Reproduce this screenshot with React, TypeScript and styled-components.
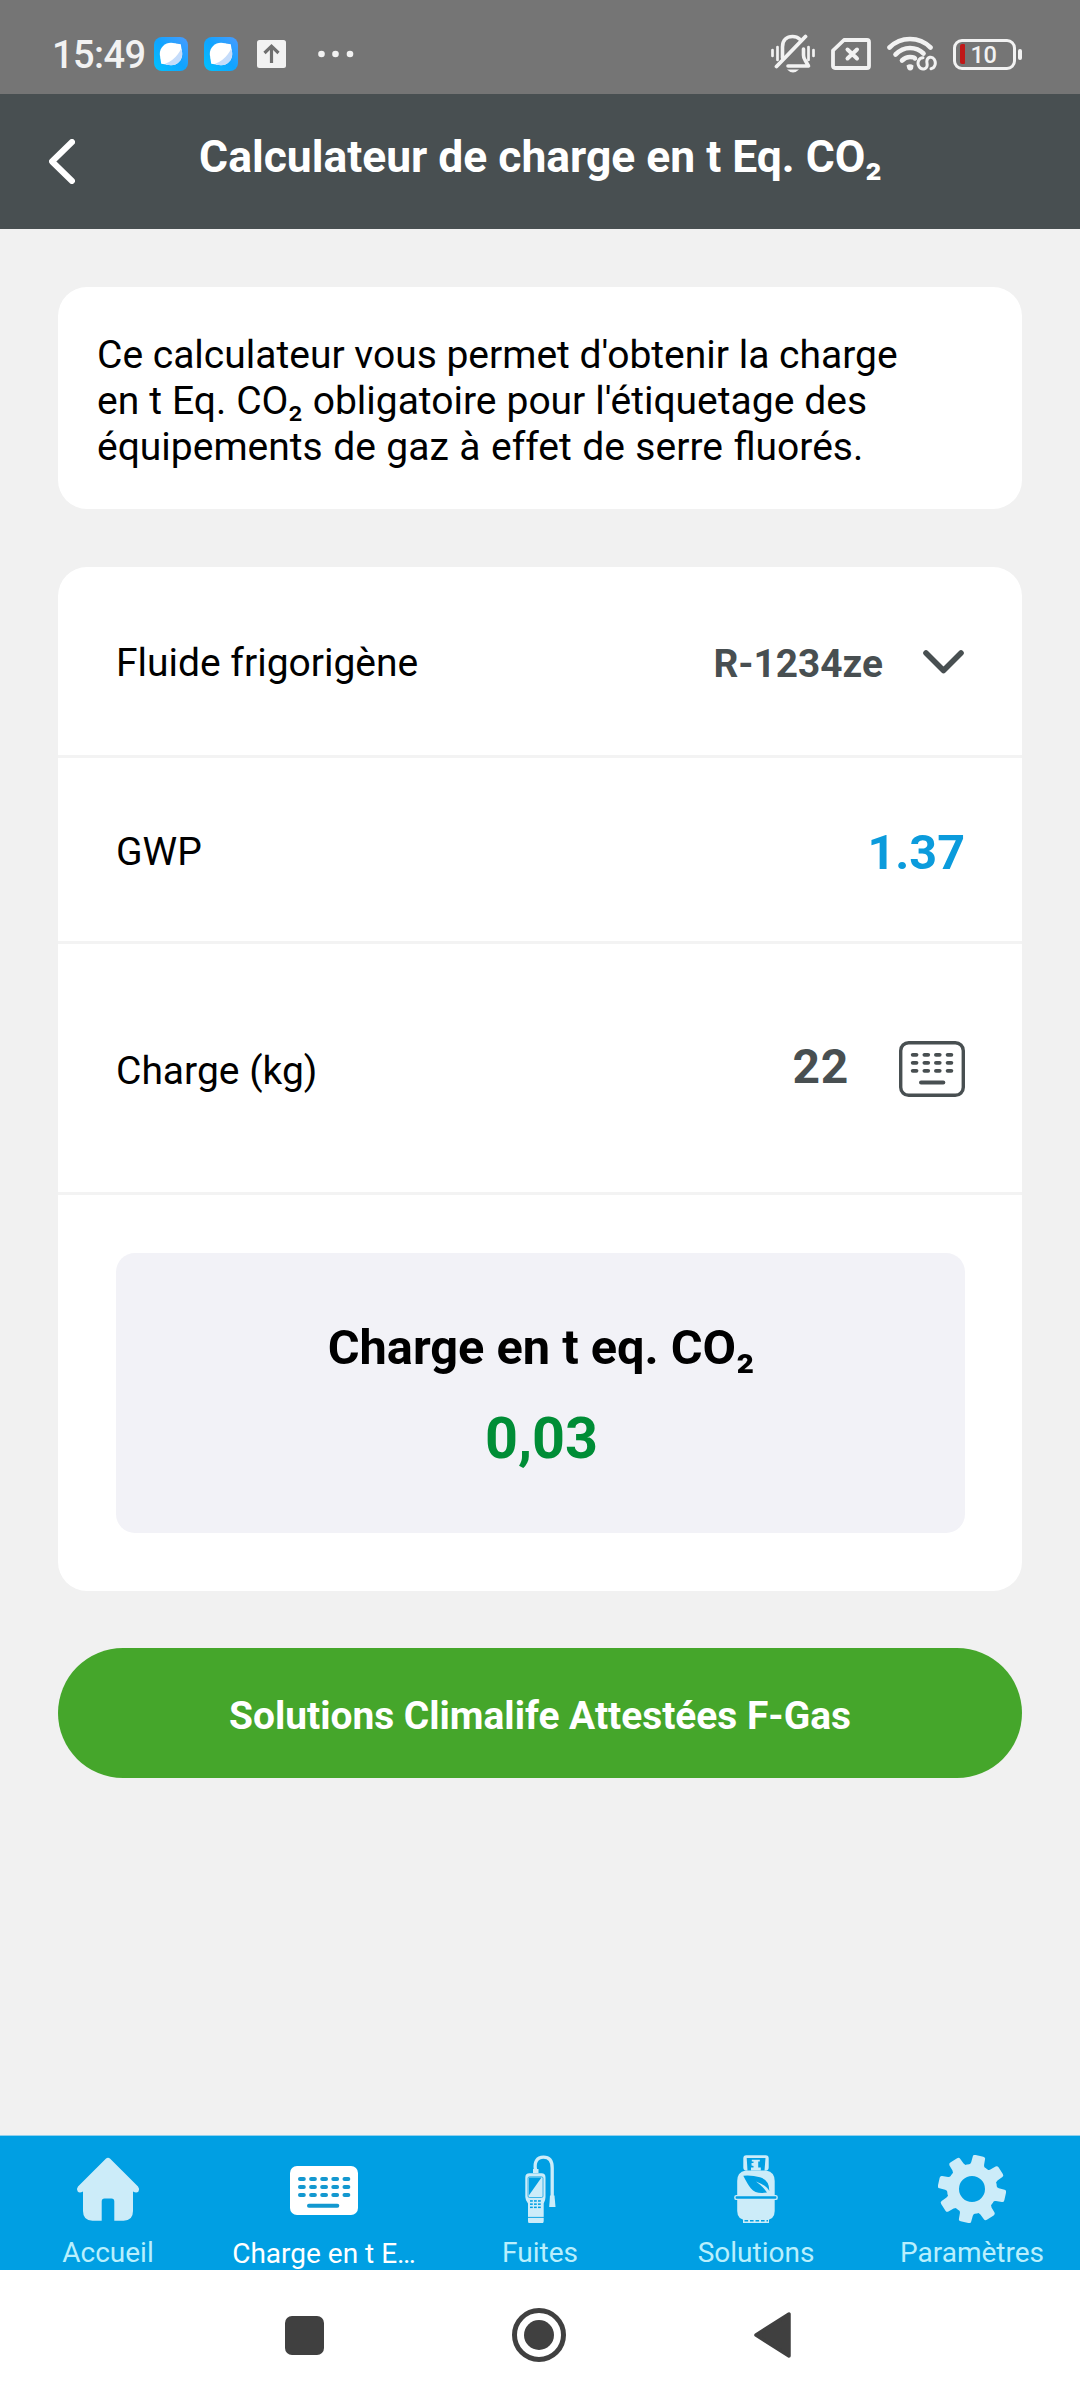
import React from "react";
import styled, { createGlobalStyle } from "styled-components";

const GlobalStyle = createGlobalStyle`
  * { box-sizing: border-box; }
  html, body { margin: 0; padding: 0; }
  body { background: #f1f1f1; font-family: Roboto, "Noto Sans", sans-serif; }
  svg { display: block; flex: none; }
`;

const Screen = styled.div`
  width: 1080px;
  height: 2400px;
  display: flex;
  flex-direction: column;
  background: #f1f1f1;
  overflow: hidden;
`;

const StatusBar = styled.div`
  height: 94px;
  flex: none;
  display: flex;
  justify-content: space-between;
  padding: 14px 58px 0 52px;
  background: #757575;
`;

const StatusGroup = styled.div`
  display: flex;
  align-items: center;
  gap: 16px;
  height: 80px;
`;

const Clock = styled.span`
  width: 92px;
  margin-right: -6px;
  padding-top: 1px;
  font-size: 38px;
  line-height: 44px;
  font-weight: 500;
  letter-spacing: -0.6px;
  color: #f2f2f2;
  white-space: nowrap;
`;

const Overflow = styled.div`
  display: flex;
  align-items: center;
  gap: 32px;
  margin-left: 3px;
`;

const Battery = styled.div`
  display: flex;
  align-items: center;
`;

const BatteryShell = styled.div`
  width: 63px;
  height: 31px;
  display: flex;
  align-items: center;
  padding: 0 0 0 3.5px;
  border: 3px solid #f2f2f2;
  border-radius: 9px;
`;

const BatteryCharge = styled.div`
  width: 5px;
  height: 20px;
  margin-right: 6px;
  border-radius: 2px 1px 1px 2px;
  background: #c01818;
`;

const BatteryText = styled.span`
  padding-top: 1px;
  font-size: 23.5px;
  line-height: 26px;
  font-weight: 500;
  letter-spacing: -0.3px;
  color: #f2f2f2;
`;

const BatteryTip = styled.div`
  width: 4px;
  height: 11px;
  margin-left: 2px;
  border-radius: 2px;
  background: #f2f2f2;
`;

const Header = styled.header`
  height: 135px;
  flex: none;
  display: grid;
  grid-template-columns: 120px 840px 120px;
  background: #484f51;
`;

const BackButton = styled.div`
  padding: 45px 0 0 49px;
`;

const Title = styled.h1`
  margin: 0;
  padding: 37px 0 0 1px;
  font-size: 44.4px;
  line-height: 52px;
  font-weight: 700;
  text-align: center;
  color: #fff;
  white-space: nowrap;
`;

const Content = styled.main`
  flex: 1;
  padding: 58px 58px 0;
  display: flex;
  flex-direction: column;
`;

const Card = styled.section`
  border-radius: 29px;
  background: #fff;
  overflow: hidden;
`;

const Intro = styled(Card)`
  height: 222px;
  margin-bottom: 58px;
  padding: 45px 39px 0;
  font-size: 39px;
  line-height: 46px;
  color: #000;
  white-space: nowrap;
`;

const IntroLine = styled.div<{ $wordGap?: number }>`
  word-spacing: ${(p) => p.$wordGap ?? 0}px;
`;

const Row = styled.div<{ $height: number }>`
  height: ${(p) => p.$height}px;
  display: flex;
  align-items: center;
  padding: 0 57px 0 58px;
  border-bottom: 3px solid #f3f3f3;
`;

const Label = styled.span<{ $drop: number }>`
  flex: 1;
  padding-top: ${(p) => p.$drop}px;
  font-size: 39px;
  line-height: 46px;
  color: #000;
`;

const Value = styled.span<{ $size: number; $color: string; $shift?: number; $gap?: number; $spacing?: number }>`
  font-size: ${(p) => p.$size}px;
  line-height: 58px;
  font-weight: 700;
  color: ${(p) => p.$color};
  letter-spacing: ${(p) => p.$spacing ?? 0}px;
  margin-top: ${(p) => p.$shift ?? 0}px;
  margin-right: ${(p) => p.$gap ?? 0}px;
`;

const RowIcon = styled.div`
  padding-top: 2px;
`;

const ResultWrap = styled.div`
  height: 396px;
  padding: 58px 57px 58px 58px;
`;

const Result = styled.div`
  height: 280px;
  padding-top: 66px;
  border-radius: 19px;
  background: #f2f2f7;
  text-align: center;
`;

const ResultTitle = styled.div`
  padding-left: 1px;
  font-size: 48.7px;
  line-height: 58px;
  font-weight: 700;
  color: #000;
`;

const ResultValue = styled.div`
  margin-top: 27px;
  padding-left: 2px;
  font-size: 57.5px;
  line-height: 70px;
  font-weight: 700;
  color: #008d36;
`;

const Cta = styled.button`
  width: 964px;
  height: 130px;
  flex: none;
  margin: 57px 0 0;
  padding: 5px 0 0;
  border: 0;
  border-radius: 65px;
  background: #45a62b;
  color: #fff;
  font-family: inherit;
  font-size: 38.9px;
  font-weight: 700;
`;

const Tabs = styled.nav`
  height: 135px;
  flex: none;
  display: grid;
  grid-template-columns: repeat(5, 216px);
  border-top: 1px solid #8fcfec;
  background: #009fe3;
`;

const Tab = styled.div<{ $active?: boolean }>`
  display: flex;
  flex-direction: column;
  align-items: center;
  padding-top: 19px;
  color: ${(p) => (p.$active ? "#fff" : "#ccecf9")};
`;

const TabLabel = styled.span<{ $active?: boolean }>`
  width: 184px;
  margin-top: ${(p) => (p.$active ? 14 : 13)}px;
  font-size: 28px;
  line-height: 34px;
  text-align: center;
  white-space: nowrap;
  color: ${(p) => (p.$active ? "#fff" : "#b9effd")};
`;

const SystemNav = styled.div`
  height: 130px;
  flex: none;
  display: flex;
  align-items: center;
  padding-left: 285px;
  background: #fff;
`;

const Square = styled.div`
  width: 39px;
  height: 39px;
  margin-right: 188px;
  border-radius: 7px;
  background: #404040;
`;

const Ring = styled.div`
  width: 54px;
  height: 54px;
  display: grid;
  place-items: center;
  margin-right: 188px;
  border: 5px solid #404040;
  border-radius: 50%;
`;

const Dot = styled.div`
  width: 30px;
  height: 30px;
  border-radius: 50%;
  background: #404040;
`;

const BrowserIcon = () => (
  <svg width="34" height="34" viewBox="0 0 34 34">
    <defs>
      <linearGradient id="sky" x1="1" y1="0" x2="0" y2="1">
        <stop offset="0" stopColor="#4a9bff" />
        <stop offset="0.5" stopColor="#10a4ff" />
        <stop offset="1" stopColor="#00c4ff" />
      </linearGradient>
      <clipPath id="disc">
        <circle cx="17" cy="17" r="11.2" />
      </clipPath>
    </defs>
    <rect width="34" height="34" rx="8" fill="url(#sky)" />
    <circle cx="17" cy="17" r="11.2" fill="#fff" />
    <path d="M6.200 20L7.200 26.800L14 27.800ZM20 6.200L26.800 7.200L27.800 14Z" fill="#fff" />
    <path d="M29 7Q24 23 8 28L30 30Z" fill="#c5dcfa" clipPath="url(#disc)" />
  </svg>
);

const UploadIcon = () => (
  <svg width="29" height="28" viewBox="0 0 29 28">
    <rect width="29" height="28" rx="2.5" fill="#f2f2f2" />
    <path d="M14.5 23V7M7.500 13L14.500 6.200L21.500 13" fill="none" stroke="#6f6f6f" strokeWidth="3.200" />
  </svg>
);

const MoreIcon = () => (
  <svg width="36" height="8" viewBox="0 0 36 8">
    <g fill="#f2f2f2">
      <circle cx="3.500" cy="4" r="3.300" />
      <circle cx="17.500" cy="4" r="3.300" />
      <circle cx="32" cy="4" r="3.300" />
    </g>
  </svg>
);

const SilentIcon = () => (
  <svg width="44" height="40" viewBox="0 0 44 40" fill="none" stroke="#f2f2f2" strokeLinecap="round">
    <path d="M1.500 16V22M6.500 13V26M37.500 13V26M42.500 16V22" strokeWidth="2.700" />
    <path d="M11.500 24V13C11.500 6 16 2.500 21.500 2.500Q26 2.500 28.500 5" strokeWidth="3.600" />
    <path d="M32.500 15V21Q32.500 24 34 26L37.500 32H17" strokeWidth="3.600" strokeLinejoin="round" />
    <path d="M5.500 32.500L34.500 2.500" strokeWidth="3.800" />
    <path d="M16 35.500H28Q22 41.500 16 35.500Z" fill="#f2f2f2" stroke="none" />
  </svg>
);

const NoSimIcon = () => (
  <svg width="40" height="32" viewBox="0 0 40 32" fill="none" stroke="#f2f2f2" strokeLinejoin="round">
    <path d="M13 2H36Q38 2 38 4V28Q38 30 36 30H4Q2 30 2 28V12.500Z" strokeWidth="3.800" />
    <path d="M16.500 11.500L26 20.500M26 11.500L16.500 20.500" strokeWidth="4" strokeLinecap="round" />
  </svg>
);

const WifiIcon = () => (
  <svg width="50" height="36" viewBox="0 0 50 36" fill="none" stroke="#f2f2f2" strokeLinecap="round">
    <path d="M2.500 11.500Q11 3 23 3T43.500 11.500" strokeWidth="4.600" />
    <path d="M8.500 18.500Q15 12 23 12T36.500 17.500" strokeWidth="4.600" />
    <path d="M15 24.500Q18.500 21 23 21T28 22.500" strokeWidth="4.600" />
    <path d="M19.500 29.500Q23 26.800 26.500 29.500L26 33Q23 36 20.500 33Z" fill="#f2f2f2" stroke="none" />
    <path
      d="M36 21.800C31.500 22 29.800 27 32 30.500C34.500 34.500 40 33.500 40.200 29L39.800 25.500C40 20.800 45 19.800 47.200 23.200C49.500 27 48 32 44 32.800"
      strokeWidth="3"
    />
  </svg>
);

const HomeIcon = () => (
  <svg width="68" height="68" viewBox="0 0 68 68" fill="currentColor">
    <path d="M31.800 3.800Q34 1.800 36.200 3.800L64 31.500Q66 34 64.500 36.500Q62.500 38.500 59 36.500V56Q59 65.700 49.500 65.700H40.300V46.500Q40.300 43.500 37.500 43.500H30.500Q27.700 43.500 27.700 46.500V65.700H18.500Q9 65.700 9 56V36.500Q5.500 38.500 3.700 36.500Q2 34 4 31.500Z" />
  </svg>
);

const KeyboardTabIcon = () => (
  <svg width="68" height="68" viewBox="0 0 68 68">
    <rect x="0" y="11" width="68" height="49" rx="7" fill="currentColor" />
    <g fill="#1398d0">
      {[22, 30, 38].map((y) =>
        [8, 19.1, 30.2, 41.3, 52.5].map((x) => <rect key={`${x}-${y}`} x={x} y={y} width="7.800" height="4" rx="2" />)
      )}
      <rect x="17" y="48.800" width="32.300" height="3.900" rx="1.900" />
    </g>
  </svg>
);

const DetectorIcon = () => (
  <svg width="68" height="68" viewBox="0 0 68 68" fill="currentColor">
    <path d="M29.500 15C28 7 31 2.200 37.500 2.200S46.200 7 46.200 13V41" fill="none" stroke="currentColor" strokeWidth="3.300" />
    <path d="M27 14H32.500V18H27Z" />
    <path d="M44 40.500H48.500L49.500 52H43.200Z" />
    <path d="M23.500 18.300H35.500Q39.500 18.300 39.500 22.500V42Q39.500 45 37.700 48.500V66Q37.700 68.700 34.500 68.700H25Q22 68.700 22 66V48.500Q19.300 45 19.300 42V22.500Q19.300 18.300 23.500 18.300Z" />
    <g fill="#009fe3">
      <path d="M22.800 22.500H35.500L22.800 40.500Z" />
      <rect x="22" y="61.900" width="16" height="0.900" />
      {[45.2, 48.4, 51.6].map((y) => [24, 28, 32].map((x) => <rect key={`${x}-${y}`} x={x} y={y} width="2.800" height="1.500" />))}
    </g>
    <rect x="22" y="21.800" width="15" height="20.700" rx="1.500" fill="none" stroke="#009fe3" strokeWidth="0.700" />
  </svg>
);

const BottleIcon = () => (
  <svg width="68" height="68" viewBox="0 0 68 68" fill="currentColor">
    <path d="M25.500 15.500H24.200Q21.300 15.500 21.300 12.500V3.300Q21.300 0.300 24.300 0.300H43.700Q46.700 0.300 46.700 3.300V12.500Q46.700 15.500 43.800 15.500H42.500L43.500 3H24.700Z" />
    <path d="M29.800 4.800H37.800V6.500H36.200V12.500H38.800V15.500H29V12.500H31.500V11L29.500 10.500V8H31.500V6.500H29.800Z" />
    <path d="M23.500 15.500H44.300Q52.700 17 52.700 26V41H15.200V26Q15.200 17 23.500 15.500Z" />
    <path d="M15.200 44.500H52.700V56Q52.700 65 43 65H25Q15.200 65 15.200 56Z" />
    <rect x="12.900" y="40.600" width="42.200" height="3.800" rx="1.500" fill="#009fe3" stroke="currentColor" strokeWidth="1.400" />
    <path d="M21.300 20.700Q30 20 38 22.200Q47.500 25 47.300 36Q45 31 34 26.500Q41.500 32 45 37.500Q34 39.500 29 33.500Q26 30 21.300 20.700Z" fill="#009fe3" />
    <rect x="21" y="64" width="26" height="4.700" />
    <path d="M22.500 65.800H46" stroke="#009fe3" strokeWidth="1.500" strokeDasharray="3.600 1.900" />
  </svg>
);

const GearIcon = () => (
  <svg width="68" height="68" viewBox="0 0 68 68" fill="currentColor">
    <g transform="rotate(12.500 34 34)">
      {[0, 45, 90, 135, 180, 225, 270, 315].map((a) => (
        <path
          key={a}
          transform={`rotate(${a} 34 34)`}
          d="M30 0H38Q40.200 0 40.300 2L40.600 8Q41 10.500 43 12H25Q27 10.500 27.400 8L27.700 2Q27.800 0 30 0Z"
        />
      ))}
    </g>
    <circle cx="34" cy="34" r="19" fill="none" stroke="currentColor" strokeWidth="12" />
  </svg>
);

const KeypadIcon = () => (
  <svg width="66" height="56" viewBox="0 0 66 56">
    <rect x="1.700" y="1.700" width="62.600" height="52.600" rx="8" fill="none" stroke="#484f51" strokeWidth="3.400" />
    <g fill="#484f51">
      {[11.9, 19.9, 27.9].map((y) =>
        [11.8, 23.5, 35, 46.7].map((x) => <rect key={`${x}-${y}`} x={x} y={y} width="7.600" height="3.900" rx="1.950" />)
      )}
      <rect x="20" y="39.500" width="26.300" height="4" rx="2" />
    </g>
  </svg>
);

export default function App() {
  return (
    <>
      <GlobalStyle />
      <Screen>
        <StatusBar>
          <StatusGroup>
            <Clock>15:49</Clock>
            <BrowserIcon />
            <BrowserIcon />
            <Overflow>
              <UploadIcon />
              <MoreIcon />
            </Overflow>
          </StatusGroup>
          <StatusGroup>
            <SilentIcon />
            <NoSimIcon />
            <WifiIcon />
            <Battery>
              <BatteryShell>
                <BatteryCharge />
                <BatteryText>10</BatteryText>
              </BatteryShell>
              <BatteryTip />
            </Battery>
          </StatusGroup>
        </StatusBar>

        <Header>
          <BackButton>
            <svg width="26" height="45" viewBox="0 0 26 45" fill="none" stroke="#fff" strokeWidth="6" strokeLinecap="round" strokeLinejoin="round">
              <path d="M23 3L3 22.500L23 42" />
            </svg>
          </BackButton>
          <Title>Calculateur de charge en t Eq. CO₂</Title>
        </Header>

        <Content>
          <Intro>
            <IntroLine>Ce calculateur vous permet d'obtenir la charge</IntroLine>
            <IntroLine $wordGap={0.3}>en t Eq. CO₂ obligatoire pour l'étiquetage des</IntroLine>
            <IntroLine $wordGap={0.8}>équipements de gaz à effet de serre fluorés.</IntroLine>
          </Intro>

          <Card>
            <Row $height={191}>
              <Label $drop={3}>Fluide frigorigène</Label>
              <Value $size={38.8} $color="#484f51" $shift={6} $gap={40}>R-1234ze</Value>
              <RowIcon>
                <svg width="42" height="24" viewBox="0 0 42 24" fill="none" stroke="#484f51" strokeWidth="5.600" strokeLinecap="round" strokeLinejoin="round">
                  <path d="M3 3L20.500 20.500L38 3" />
                </svg>
              </RowIcon>
            </Row>
            <Row $height={186}>
              <Label $drop={5}>GWP</Label>
              <Value $size={48.5} $color="#0b9bdc" $shift={6}>1.37</Value>
            </Row>
            <Row $height={251}>
              <Label $drop={6}>Charge (kg)</Label>
              <Value $size={48} $color="#484f51" $shift={-2} $gap={50} $spacing={0.7}>22</Value>
              <RowIcon>
                <KeypadIcon />
              </RowIcon>
            </Row>
            <ResultWrap>
              <Result>
                <ResultTitle>Charge en t eq. CO₂</ResultTitle>
                <ResultValue>0,03</ResultValue>
              </Result>
            </ResultWrap>
          </Card>

          <Cta>Solutions Climalife Attestées F-Gas</Cta>
        </Content>

        <Tabs>
          <Tab>
            <HomeIcon />
            <TabLabel>Accueil</TabLabel>
          </Tab>
          <Tab $active>
            <KeyboardTabIcon />
            <TabLabel $active>Charge en t E…</TabLabel>
          </Tab>
          <Tab>
            <DetectorIcon />
            <TabLabel>Fuites</TabLabel>
          </Tab>
          <Tab>
            <BottleIcon />
            <TabLabel>Solutions</TabLabel>
          </Tab>
          <Tab>
            <GearIcon />
            <TabLabel>Paramètres</TabLabel>
          </Tab>
        </Tabs>

        <SystemNav>
          <Square />
          <Ring>
            <Dot />
          </Ring>
          <svg width="37" height="46" viewBox="0 0 37 46">
            <path d="M2 23L35 2V44Z" fill="#404040" stroke="#404040" strokeWidth="3.500" strokeLinejoin="round" />
          </svg>
        </SystemNav>
      </Screen>
    </>
  );
}
